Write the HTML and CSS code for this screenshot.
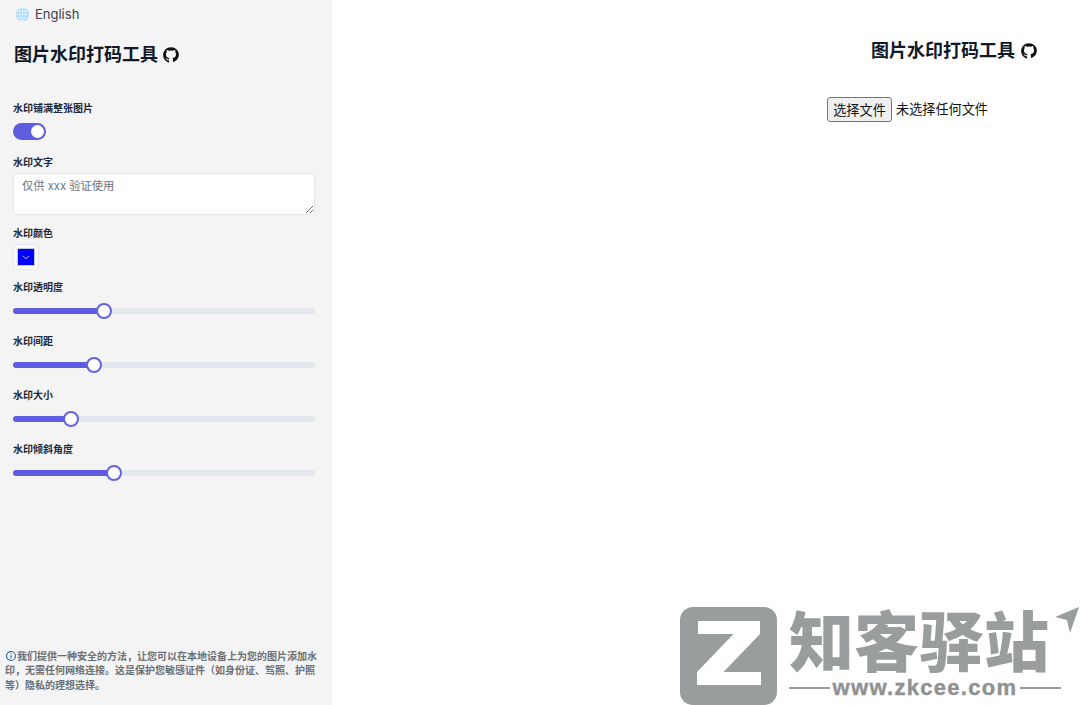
FILE: index.html
```html
<!DOCTYPE html>
<html lang="zh-CN">
<head>
<meta charset="utf-8">
<title>图片水印打码工具</title>
<link rel="stylesheet" href="styles.css">
</head>
<body>
<div class="app">
  <aside class="sidebar">
    <div class="lang">
      <svg class="globe" viewBox="0 0 16 16"><circle cx="8" cy="8" r="7" fill="#a6d8fb"/><g fill="none" stroke="#e3f3ff" stroke-width="0.9"><ellipse cx="8" cy="8" rx="3.2" ry="7"/><path d="M8 1v14M1 8h14M2 4.5h12M2 11.500h12"/></g></svg>
      <span>English</span>
    </div>
    <h1 class="title">图片水印打码工具
      <svg class="gh" viewBox="0 0 24 24"><path d="M12 1.500C6.200 1.500 1.500 6.200 1.500 12c0 4.600 3 8.600 7.200 10 .5.100.7-.2.700-.5v-2.600c-2.900.6-3.500-1.300-3.500-1.300-.5-1.200-1.200-1.500-1.200-1.500-.9-.6.100-.6.100-.6 1 .1 1.600 1.100 1.600 1.100.9 1.600 2.400 1.100 3 .9.100-.7.400-1.100.7-1.400-2.300-.3-4.800-1.200-4.800-5.200 0-1.100.4-2.100 1.100-2.800-.1-.3-.5-1.300.1-2.800 0 0 .9-.3 2.900 1.100a10 10 0 0 1 5.200 0c2-1.400 2.900-1.100 2.900-1.100.6 1.500.2 2.500.1 2.800.7.700 1.100 1.700 1.100 2.800 0 4-2.500 4.900-4.800 5.200.4.300.7 1 .7 1.900v2.800c0 .3.200.6.700.5 4.200-1.400 7.200-5.400 7.200-10C22.500 6.200 17.800 1.500 12 1.500z"/></svg>
    </h1>

    <div class="field first">
      <label class="label">水印铺满整张图片</label>
      <span class="switch"><span class="knob"></span></span>
    </div>
    <div class="field">
      <label class="label" for="txt">水印文字</label>
      <textarea id="txt" class="area" placeholder="仅供 xxx 验证使用"></textarea>
    </div>
    <div class="field">
      <label class="label">水印颜色</label>
      <span class="color"><span class="swatch"><svg class="chev" viewBox="0 0 10 6"><path d="M1 1l4 3.500L9 1" fill="none" stroke="#fff" stroke-width="0.9"/></svg></span></span>
    </div>
    <div class="field">
      <label class="label">水印透明度</label>
      <input class="range" type="range" min="0" max="100" value="29" step="0.1" style="--p:30%">
    </div>
    <div class="field">
      <label class="label">水印间距</label>
      <input class="range" type="range" min="0" max="100" value="25.5" step="0.1" style="--p:27%">
    </div>
    <div class="field">
      <label class="label">水印大小</label>
      <input class="range" type="range" min="0" max="100" value="17.5" step="0.1" style="--p:19%">
    </div>
    <div class="field">
      <label class="label">水印倾斜角度</label>
      <input class="range" type="range" min="0" max="100" value="32.5" step="0.1" style="--p:33%">
    </div>

    <p class="note"><svg class="info" viewBox="0 0 12 12"><circle cx="6" cy="6" r="4.500" fill="none" stroke="#2563a8" stroke-width="1.100"/><path d="M6 5.200v3.300M6 3.200v1.100" stroke="#2563a8" stroke-width="1.100"/></svg>我们提供一种安全的方法，让您可以在本地设备上为您的图片添加水印，无需任何网络连接。这是保护您敏感证件（如身份证、驾照、护照等）隐私的理想选择。</p>
  </aside>

  <main class="main">
    <div class="panel">
      <h2 class="title-main">图片水印打码工具
        <svg class="gh" viewBox="0 0 24 24"><path d="M12 1.500C6.200 1.500 1.500 6.200 1.500 12c0 4.600 3 8.600 7.200 10 .5.100.7-.2.700-.5v-2.600c-2.900.6-3.500-1.300-3.500-1.300-.5-1.200-1.200-1.500-1.200-1.500-.9-.6.100-.6.100-.6 1 .1 1.600 1.100 1.600 1.100.9 1.600 2.400 1.100 3 .9.100-.7.400-1.100.7-1.400-2.300-.3-4.800-1.200-4.800-5.200 0-1.100.4-2.100 1.100-2.800-.1-.3-.5-1.300.1-2.800 0 0 .9-.3 2.900 1.100a10 10 0 0 1 5.200 0c2-1.400 2.900-1.100 2.900-1.100.6 1.500.2 2.500.1 2.800.7.700 1.100 1.700 1.100 2.800 0 4-2.500 4.900-4.800 5.200.4.300.7 1 .7 1.900v2.800c0 .3.200.6.700.5 4.200-1.400 7.200-5.400 7.200-10C22.500 6.200 17.800 1.500 12 1.500z"/></svg>
      </h2>
      <div class="file">
        <button class="file-btn" type="button">选择文件</button>
        <span class="file-name">未选择任何文件</span>
      </div>
    </div>
  </main>
</div>

<div class="wm">
  <svg class="wm-logo" viewBox="0 0 97 98"><rect width="97" height="98" rx="13" fill="#9a9d9d"/><path d="M18 14H80V27L43.500 65H81V78H17V65L53.500 27H18Z" fill="#fff"/></svg>
  <div class="wm-text">
    <div class="wm-name">知客驿站</div>
    <div class="wm-url"><span class="wm-line"></span><span class="wm-site">www.zkcee.com</span><span class="wm-line"></span></div>
  </div>
  <svg class="wm-arrow" viewBox="0 0 24 26"><path d="M0 10L24 0L15 26L12 13Z" fill="#9a9d9d"/></svg>
</div>
</body>
</html>
```
FILE: styles.css
```css
* { box-sizing: border-box; }
html, body { margin: 0; height: 100%; }
body {
  font-family: Inter, "Noto Sans CJK SC", sans-serif;
  color: #111827;
  background: #fff;
  overflow: hidden;
}
.app { display: flex; height: 705px; }

.sidebar {
  width: 332px;
  flex: none;
  background: #f4f4f4;
  padding: 0 17px 0 13px;
  display: flex;
  flex-direction: column;
}
.lang {
  display: flex;
  align-items: center;
  gap: 5px;
  height: 28px;
  padding-left: 2px;
  font-size: 13px;
  color: #374151;
}
.globe { width: 15px; height: 15px; }
.title, .title-main {
  margin: 0;
  font-size: 18px;
  font-weight: 700;
  line-height: 24px;
  color: #111827;
  display: flex;
  align-items: center;
  gap: 4px;
  white-space: nowrap;
}
.title { margin-top: 15px; margin-left: 1px; }
.title-main { gap: 5px; margin-left: -1px; }
.gh { width: 18px; height: 18px; fill: #111; }

.field { display: flex; flex-direction: column; align-items: flex-start; margin-top: 14px; }
.field.first { margin-top: 34px; }
.label { font-size: 10px; font-weight: 700; line-height: 15px; height: 15px; color: #1f2937; }

.switch {
  width: 33px;
  height: 17px;
  margin-top: 7px;
  margin-bottom: 1px;
  border-radius: 9px;
  background: #5f5ddf;
  position: relative;
}
.knob {
  position: absolute;
  right: 2px;
  top: 2px;
  width: 13px;
  height: 13px;
  border-radius: 50%;
  background: #fff;
}
.area {
  display: block;
  width: 302px;
  height: 42px;
  margin-top: 3px;
  margin-bottom: -3px;
  padding: 5px 8px;
  font: 11.250px/15px Inter, "Noto Sans CJK SC", sans-serif;
  background: #fff;
  border: 1px solid #e5e7eb;
  border-radius: 4px;
  outline: none;
}
.area::placeholder { color: #6b7280; opacity: 1; }

.color {
  margin-top: 3px;
  margin-bottom: -4px;
  width: 26px;
  height: 26px;
  display: flex;
  align-items: center;
  justify-content: center;
  background: #f9fafb;
  border: 1px solid #e5e7eb;
  border-radius: 4px;
}
.swatch {
  width: 18px;
  height: 18px;
  background: #0000ff;
  border: 1px solid #c7c7e0;
  display: flex;
  align-items: center;
  justify-content: center;
}
.chev { width: 8px; height: 5px; }

.range {
  -webkit-appearance: none;
  appearance: none;
  display: block;
  width: 302px;
  height: 18px;
  margin: 7px 0 0;
  background: transparent;
}
.range::-webkit-slider-runnable-track {
  height: 6px;
  border-radius: 3px;
  background: linear-gradient(to right, #5f5ddf var(--p), #e5e7ef var(--p));
}
.range::-webkit-slider-thumb {
  -webkit-appearance: none;
  width: 16px;
  height: 16px;
  margin-top: -5px;
  border-radius: 50%;
  background: #fff;
  border: 2px solid #6563e2;
}

.note {
  margin: auto -12px 13px -8px;
  font-size: 10px;
  font-weight: 700;
  line-height: 14.500px;
  color: #6b6f76;
}
.info { width: 12px; height: 12px; vertical-align: -2.500px; }

.main { flex: 1; display: flex; justify-content: flex-end; }
.panel {
  width: 250px;
  display: flex;
  flex-direction: column;
  align-items: center;
  padding-top: 39px;
}
.file {
  align-self: flex-start;
  display: flex;
  align-items: center;
  gap: 4px;
  margin-top: 34px;
  margin-left: -3px;
  font-size: 13.150px;
  color: #111;
}
.file-btn {
  width: 65px;
  height: 25px;
  padding: 0;
  font: 13.150px "Noto Sans CJK SC", sans-serif;
  color: #111;
  background: #efefef;
  border: 1px solid #767676;
  border-radius: 3px;
}
.file-name { font-family: "Noto Sans CJK SC", sans-serif; line-height: 23px; margin-bottom: 2px; white-space: nowrap; }

.wm {
  position: absolute;
  left: 680px;
  top: 607px;
  width: 400px;
  height: 98px;
  display: flex;
  color: #9a9d9d;
}
.wm-logo { width: 97px; height: 98px; flex: none; }
.wm-text { margin-left: 12px; width: 272px; display: flex; flex-direction: column; }
.wm-name {
  font: 900 65px/62px "Noto Sans CJK SC", sans-serif;
  width: 262px;
  white-space: nowrap;
}
.wm-url {
  display: flex;
  align-items: center;
  gap: 3px;
  margin-top: 7px;
  font: 700 22px/24px "Liberation Sans", sans-serif;
  letter-spacing: 1.300px;
  white-space: nowrap;
  color: #8f9292;
}
.wm-site { -webkit-text-stroke: 0.4px #8f9292; }
.wm-line { flex: 1; height: 2px; background: #9a9d9d; }
.wm-arrow { position: absolute; left: 375px; top: 0; width: 24px; height: 26px; }
```
